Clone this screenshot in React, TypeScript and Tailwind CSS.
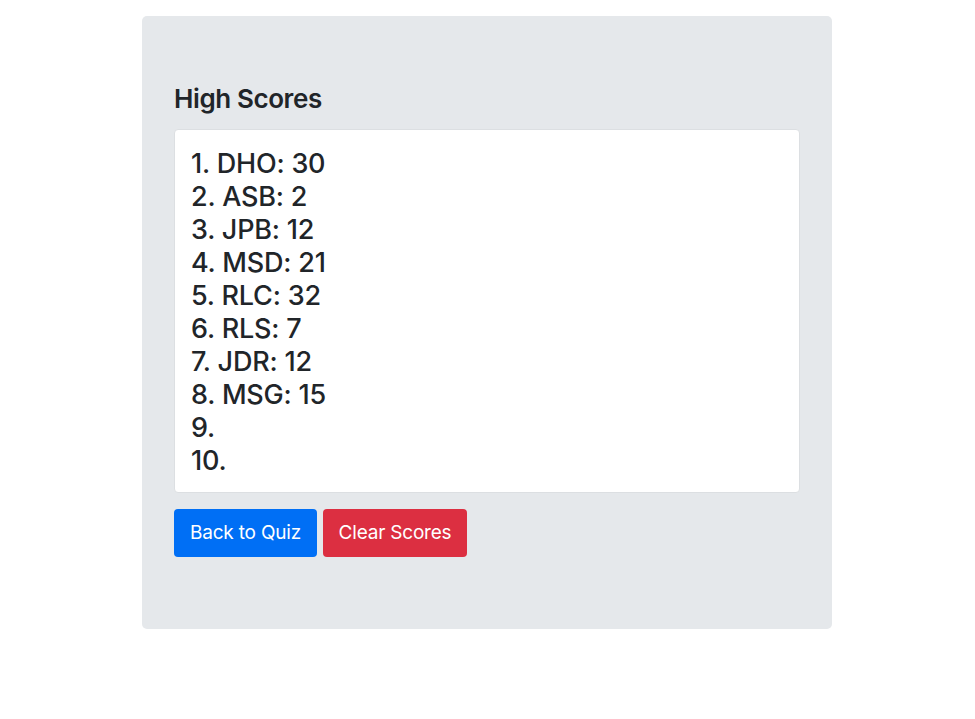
import React from "react";

const scores = [
  "1. DHO: 30",
  "2. ASB: 2",
  "3. JPB: 12",
  "4. MSD: 21",
  "5. RLC: 32",
  "6. RLS: 7",
  "7. JDR: 12",
  "8. MSG: 15",
  "9.",
  "10.",
];

export default function App() {
  return (
    <div className="min-h-[719px] bg-white text-[#212529]" style={{ fontFamily: "Inter, 'Noto Sans', sans-serif" }}>
      <div className="pt-4 flex justify-center">
        <div className="w-[690px] ml-[-1px] bg-[#e5e8eb] rounded-[5px] px-8 pt-[67px] pb-[72px]">
          <h4 className="text-[26px] leading-[31px] font-semibold tracking-[-0.4px]">High Scores</h4>
          <div className="mt-[15px] bg-white border border-[#dcdfe2] rounded-[4px] pl-4 pt-[17px] pb-[15px]">
            {scores.map((s) => (
              <div key={s} className="text-[27px] leading-[33px] font-medium tracking-[-0.2px]">
                {s}
              </div>
            ))}
          </div>
          <div className="mt-4 flex gap-[6px]">
            <button className="h-12 w-[143px] rounded-[4px] bg-[#006ff5] text-white text-[19px] tracking-[-0.2px]">
              Back to Quiz
            </button>
            <button className="h-12 w-[144px] rounded-[4px] bg-[#dc2f41] text-white text-[19px] tracking-[-0.2px]">
              Clear Scores
            </button>
          </div>
        </div>
      </div>
    </div>
  );
}
